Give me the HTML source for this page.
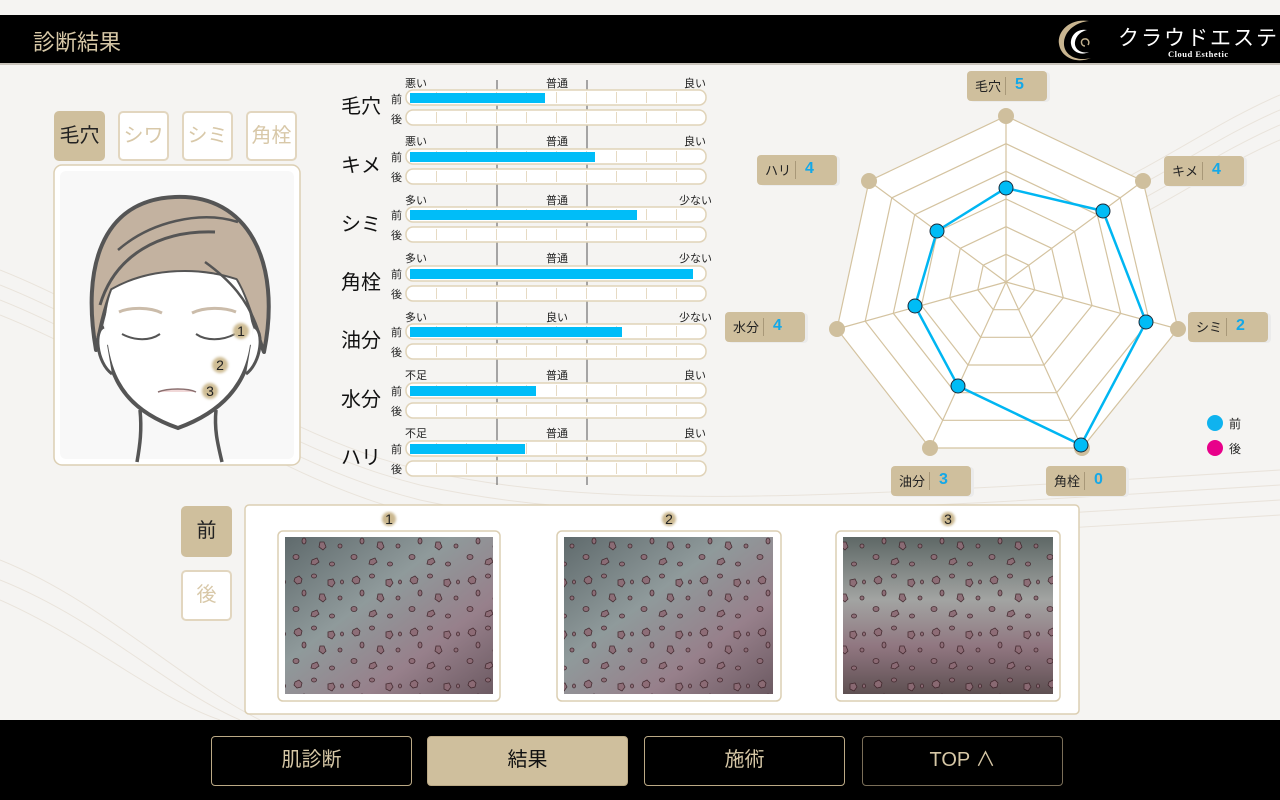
<!DOCTYPE html>
<html><head><meta charset="utf-8">
<style>
*{margin:0;padding:0;box-sizing:border-box}
body{width:1280px;height:800px;overflow:hidden;background:#f5f4f2;font-family:"Liberation Sans","Noto Sans CJK JP",sans-serif;position:relative}
.abs{position:absolute}
.hdr{left:0;top:15px;width:1280px;height:50px;background:#000;border-bottom:2px solid #c9c4bb}
.title{left:33px;top:25px;color:#d6c7a6;font-size:22px}
.tab{position:absolute;width:51px;height:50px;border:2px solid #e2d6bf;border-radius:5px;background:#fff;color:#d8c8a8;font-size:20px;text-align:center;line-height:46px}
.tab.on{background:#cfbf9d;color:#222;border-color:#cfbf9d}
.lbl{position:absolute;width:80px;height:30px;background:#cfbf9d;border-radius:4px;font-size:13px;color:#222;box-shadow:3px 1px 0 #ebebeb}
.lbl span{position:absolute;left:8px;top:5px}
.lbl i{position:absolute;left:38px;top:6px;width:1px;height:18px;background:#a89878}
.lbl b{position:absolute;left:48px;top:5px;color:#14a8e8;font-size:16px}
.nav{position:absolute;top:736px;width:201px;height:50px;border:1.5px solid #bba985;border-radius:4px;color:#d6c7a6;font-size:20px;text-align:center;line-height:47px}
.nav.on{background:#cfbf9d;color:#111}
</style></head><body>
<svg class="abs" style="left:0;top:0" width="1280" height="800" viewBox="0 0 1280 800">
<defs>
<pattern id="tk" patternUnits="userSpaceOnUse" x="407" y="0" width="30" height="800"><line x1="29.5" y1="0" x2="29.5" y2="800" stroke="#e6dac3" stroke-width="1"/></pattern>
<linearGradient id="sk1" x1="0" y1="0" x2="1" y2="1"><stop offset="0" stop-color="#5f6a6c"/><stop offset=".4" stop-color="#8f9a9b"/><stop offset=".7" stop-color="#97808b"/><stop offset="1" stop-color="#6c5a62"/></linearGradient>
<linearGradient id="sk3" x1="0" y1="0" x2="0" y2="1"><stop offset="0" stop-color="#5e6866"/><stop offset=".4" stop-color="#a2a4a2"/><stop offset=".7" stop-color="#907680"/><stop offset="1" stop-color="#5e5052"/></linearGradient>
<pattern id="dots" patternUnits="userSpaceOnUse" width="58" height="52">
<g fill="#8d6a74" stroke="#3d2228" stroke-width=".8" opacity=".9">
<path d="M5,6 l4,-2 3,3 -1,4 -4,1 -3,-3z"/><ellipse cx="24" cy="4" rx="2.5" ry="2"/><path d="M38,8 l5,-1 2,4 -3,4 -4,-2z"/><ellipse cx="14" cy="21" rx="2" ry="3"/><path d="M30,22 l4,0 2,5 -3,3 -4,-3z"/><ellipse cx="50" cy="26" rx="2" ry="2"/><ellipse cx="6" cy="37" rx="3" ry="2.5"/><path d="M22,40 l5,-2 2,4 -4,3 -4,-1z"/><ellipse cx="42" cy="44" rx="2.5" ry="2"/><ellipse cx="52" cy="10" rx="1.5" ry="2"/>
</g></pattern>
<filter id="bl"><feGaussianBlur stdDeviation="1.2"/></filter>
</defs>
<g fill="none" stroke="#e7e0d6" stroke-width="1" opacity=".8">
<path d="M0,270 C150,330 260,430 420,470 C600,510 800,500 1280,470"/>
<path d="M0,285 C150,345 260,445 420,485 C600,525 800,515 1280,485"/>
<path d="M0,300 C150,360 260,460 420,500 C600,540 800,530 1280,500"/>
<path d="M0,315 C150,375 260,475 420,515 C600,555 800,545 1280,515"/>
<path d="M0,560 C100,600 180,680 260,720"/><path d="M0,580 C100,620 170,690 240,720"/><path d="M0,600 C90,640 160,700 220,720"/>
<path d="M1080,200 C1150,170 1220,120 1280,95"/><path d="M1080,215 C1150,185 1220,135 1280,110"/><path d="M1080,230 C1150,200 1220,150 1280,125"/><path d="M1080,245 C1150,215 1220,165 1280,140"/>
</g>
<rect x="54" y="165" width="246" height="300" rx="8" fill="#fff" stroke="#dccfb3" stroke-width="1.5"/>
<rect x="60" y="171" width="234" height="288" rx="6" fill="#f8f8f8"/>
<path d="M96,350 C82,270 100,200 175,197 C248,194 282,262 264,352 C255,330 248,300 236,280 C200,268 150,268 112,290 C104,310 100,330 96,350 Z" fill="#c3b2a0" stroke="#555" stroke-width="4" stroke-linejoin="round"/>
<path d="M112,290 C150,268 200,268 236,280 C248,300 254,325 252,345 C246,385 222,413 178,428 C136,414 114,385 106,345 C104,325 106,305 112,290 Z" fill="#fff"/>
<path d="M106,345 C112,385 132,412 178,428 C222,412 246,385 252,345" fill="none" stroke="#555" stroke-width="4"/>
<path d="M100,305 C115,255 160,230 215,232" fill="none" stroke="#555" stroke-width="3"/>
<path d="M118,250 C150,222 200,210 238,222" fill="none" stroke="#555" stroke-width="2.5"/>
<path d="M205,262 C230,280 248,300 258,330" fill="none" stroke="#555" stroke-width="2.5"/>
<path d="M104,327 C94,330 96,362 112,374" fill="#fff" stroke="#555" stroke-width="3"/>
<path d="M254,327 C264,330 262,362 246,374" fill="#fff" stroke="#555" stroke-width="3"/>
<path d="M140,410 C142,430 140,445 137,462 M216,410 C214,430 218,445 222,462" fill="none" stroke="#555" stroke-width="3.5"/>
<path d="M119,312 C130,307 150,307 162,313 M192,313 C204,307 224,307 236,312" stroke="#cbbcaa" stroke-width="3" fill="none"/>
<path d="M122,334 C135,341 150,341 160,334 M196,334 C206,341 222,341 235,334" stroke="#555" stroke-width="2" fill="none"/>
<path d="M158,392 C168,388 188,388 196,392" stroke="#8a6f6f" stroke-width="1.5" fill="#f1d8d8"/>
<g filter="url(#bl)" fill="#cfbd95"><circle cx="241" cy="331" r="8"/><circle cx="220" cy="365" r="8"/><circle cx="210" cy="391" r="8"/></g>
<g font-size="14" fill="#222" text-anchor="middle"><text x="241" y="336">1</text><text x="220" y="370">2</text><text x="210" y="396">3</text></g>
<line x1="497" y1="80" x2="497" y2="485" stroke="#555"/>
<line x1="587" y1="80" x2="587" y2="485" stroke="#555"/>
<g font-size="11" fill="#222">
<text x="405" y="87">悪い</text><text x="557" y="87" text-anchor="middle">普通</text><text x="706" y="87" text-anchor="end">良い</text>
<text x="391" y="103">前</text><text x="391" y="123">後</text>
<rect x="406" y="90" width="300" height="15" rx="7" fill="#fff" stroke="#e0d3b8" stroke-width="1.5"/><rect x="430" y="92" width="250" height="11" fill="url(#tk)"/><rect x="410" y="93" width="135" height="10" fill="#00bdf8"/>
<rect x="406" y="110" width="300" height="15" rx="7" fill="#fff" stroke="#e0d3b8" stroke-width="1.5"/><rect x="430" y="112" width="250" height="11" fill="url(#tk)"/>
<text x="405" y="145">悪い</text><text x="557" y="145" text-anchor="middle">普通</text><text x="706" y="145" text-anchor="end">良い</text>
<text x="391" y="161">前</text><text x="391" y="181">後</text>
<rect x="406" y="149" width="300" height="15" rx="7" fill="#fff" stroke="#e0d3b8" stroke-width="1.5"/><rect x="430" y="151" width="250" height="11" fill="url(#tk)"/><rect x="410" y="152" width="185" height="10" fill="#00bdf8"/>
<rect x="406" y="169" width="300" height="15" rx="7" fill="#fff" stroke="#e0d3b8" stroke-width="1.5"/><rect x="430" y="171" width="250" height="11" fill="url(#tk)"/>
<text x="405" y="204">多い</text><text x="557" y="204" text-anchor="middle">普通</text><text x="712" y="204" text-anchor="end">少ない</text>
<text x="391" y="219">前</text><text x="391" y="239">後</text>
<rect x="406" y="207" width="300" height="15" rx="7" fill="#fff" stroke="#e0d3b8" stroke-width="1.5"/><rect x="430" y="209" width="250" height="11" fill="url(#tk)"/><rect x="410" y="210" width="227" height="10" fill="#00bdf8"/>
<rect x="406" y="227" width="300" height="15" rx="7" fill="#fff" stroke="#e0d3b8" stroke-width="1.5"/><rect x="430" y="229" width="250" height="11" fill="url(#tk)"/>
<text x="405" y="262">多い</text><text x="557" y="262" text-anchor="middle">普通</text><text x="712" y="262" text-anchor="end">少ない</text>
<text x="391" y="278">前</text><text x="391" y="298">後</text>
<rect x="406" y="266" width="300" height="15" rx="7" fill="#fff" stroke="#e0d3b8" stroke-width="1.5"/><rect x="410" y="269" width="283" height="10" fill="#00bdf8"/>
<rect x="406" y="286" width="300" height="15" rx="7" fill="#fff" stroke="#e0d3b8" stroke-width="1.5"/><rect x="430" y="288" width="250" height="11" fill="url(#tk)"/>
<text x="405" y="321">多い</text><text x="557" y="321" text-anchor="middle">良い</text><text x="712" y="321" text-anchor="end">少ない</text>
<text x="391" y="336">前</text><text x="391" y="356">後</text>
<rect x="406" y="324" width="300" height="15" rx="7" fill="#fff" stroke="#e0d3b8" stroke-width="1.5"/><rect x="430" y="326" width="250" height="11" fill="url(#tk)"/><rect x="410" y="327" width="212" height="10" fill="#00bdf8"/>
<rect x="406" y="344" width="300" height="15" rx="7" fill="#fff" stroke="#e0d3b8" stroke-width="1.5"/><rect x="430" y="346" width="250" height="11" fill="url(#tk)"/>
<text x="405" y="379">不足</text><text x="557" y="379" text-anchor="middle">普通</text><text x="706" y="379" text-anchor="end">良い</text>
<text x="391" y="395">前</text><text x="391" y="415">後</text>
<rect x="406" y="383" width="300" height="15" rx="7" fill="#fff" stroke="#e0d3b8" stroke-width="1.5"/><rect x="430" y="385" width="250" height="11" fill="url(#tk)"/><rect x="410" y="386" width="126" height="10" fill="#00bdf8"/>
<rect x="406" y="403" width="300" height="15" rx="7" fill="#fff" stroke="#e0d3b8" stroke-width="1.5"/><rect x="430" y="405" width="250" height="11" fill="url(#tk)"/>
<text x="405" y="437">不足</text><text x="557" y="437" text-anchor="middle">普通</text><text x="706" y="437" text-anchor="end">良い</text>
<text x="391" y="453">前</text><text x="391" y="473">後</text>
<rect x="406" y="441" width="300" height="15" rx="7" fill="#fff" stroke="#e0d3b8" stroke-width="1.5"/><rect x="430" y="443" width="250" height="11" fill="url(#tk)"/><rect x="410" y="444" width="115" height="10" fill="#00bdf8"/>
<rect x="406" y="461" width="300" height="15" rx="7" fill="#fff" stroke="#e0d3b8" stroke-width="1.5"/><rect x="430" y="463" width="250" height="11" fill="url(#tk)"/>
</g>
<g font-size="20" fill="#111" text-anchor="end">
<text x="381" y="113">毛穴</text><text x="381" y="172">キメ</text><text x="381" y="231">シミ</text><text x="381" y="289">角栓</text><text x="381" y="347">油分</text><text x="381" y="406">水分</text><text x="381" y="464">ハリ</text>
</g>
<g stroke="#d4c3a0" stroke-width="1.2" fill="none">
<polygon points="1006,116 1143,181 1178,329 1082,448 930,448 837,329 869,181" fill="#fff"/>
<polygon points="1006,143.7 1120.2,197.8 1149.3,321.2 1069.3,420.3 942.7,420.3 865.2,321.2 891.8,197.8"/>
<polygon points="1006,171.3 1097.3,214.7 1120.7,313.3 1056.7,392.7 955.3,392.7 893.3,313.3 914.7,214.7"/>
<polygon points="1006,199 1074.5,231.5 1092,305.5 1044,365 968,365 921.5,305.5 937.5,231.5"/>
<polygon points="1006,226.7 1051.7,248.3 1063.3,297.7 1031.3,337.3 980.7,337.3 949.7,297.7 960.3,248.3"/>
<polygon points="1006,254.3 1028.8,265.2 1034.7,289.8 1018.7,309.7 993.3,309.7 977.8,289.8 983.2,265.2"/>
<path d="M1006,282 L1006,116 M1006,282 L1143,181 M1006,282 L1178,329 M1006,282 L1082,448 M1006,282 L930,448 M1006,282 L837,329 M1006,282 L869,181"/>
</g>
<g fill="#cfbf9d"><circle cx="1006" cy="116" r="8"/><circle cx="1143" cy="181" r="8"/><circle cx="1178" cy="329" r="8"/><circle cx="1082" cy="448" r="8"/><circle cx="930" cy="448" r="8"/><circle cx="837" cy="329" r="8"/><circle cx="869" cy="181" r="8"/></g>
<polygon points="1006,188 1103,211 1146,322 1081,445 958,386 915,306 937,231" fill="none" stroke="#00b6f2" stroke-width="2.5"/>
<g fill="#00bcf6" stroke="#1a2a3a" stroke-width="1"><circle cx="1006" cy="188" r="7"/><circle cx="1103" cy="211" r="7"/><circle cx="1146" cy="322" r="7"/><circle cx="1081" cy="445" r="7"/><circle cx="958" cy="386" r="7"/><circle cx="915" cy="306" r="7"/><circle cx="937" cy="231" r="7"/></g>
<circle cx="1215" cy="423" r="8" fill="#0fb3ef"/><circle cx="1215" cy="448" r="8" fill="#e8008a"/>
<g font-size="12" fill="#222"><text x="1229" y="428">前</text><text x="1229" y="453">後</text></g>
<rect x="245" y="505" width="834" height="209" rx="4" fill="#fff" stroke="#dccfb3" stroke-width="1.5"/>
<rect x="278" y="531" width="222" height="170" rx="5" fill="#fff" stroke="#dccfb3" stroke-width="1.5"/>
<rect x="557" y="531" width="224" height="170" rx="5" fill="#fff" stroke="#dccfb3" stroke-width="1.5"/>
<rect x="836" y="531" width="224" height="170" rx="5" fill="#fff" stroke="#dccfb3" stroke-width="1.5"/>
<rect x="285" y="537" width="208" height="157" fill="url(#sk1)"/><rect x="285" y="537" width="208" height="157" fill="url(#dots)"/>
<rect x="564" y="537" width="209" height="157" fill="url(#sk1)"/><rect x="564" y="537" width="209" height="157" fill="url(#dots)"/>
<rect x="843" y="537" width="210" height="157" fill="url(#sk3)"/><rect x="843" y="537" width="210" height="157" fill="url(#dots)"/>
<g filter="url(#bl)" fill="#cbb88f"><circle cx="389" cy="519" r="7"/><circle cx="669" cy="519" r="7"/><circle cx="948" cy="519" r="7"/></g>
<g font-size="14" fill="#222" text-anchor="middle"><text x="389" y="524">1</text><text x="669" y="524">2</text><text x="948" y="524">3</text></g>
</svg>
<div class="abs hdr"></div>
<div class="abs title">診断結果</div>
<svg class="abs" style="left:1055px;top:18px" width="50" height="46" viewBox="0 0 50 46">
<path d="M34,3 C14,0 2,14 4,26 C6,40 22,46 36,40 C20,44 8,36 9,24 C10,12 22,4 34,3 Z" fill="#c9b590"/>
<path d="M32,12 C22,10 15,18 16,26 C17,34 26,38 34,34 C26,36 19,31 20,24 C21,17 27,13 32,12 Z" fill="#fff"/>
<path d="M30,28 C26,28 25,22 29,21 C33,20 35,24 33,27" fill="none" stroke="#bfae8c" stroke-width="1.5"/>
</svg>
<div class="abs" style="left:1118px;top:22px;color:#fff;font-size:21px;letter-spacing:2px;white-space:nowrap">クラウドエステ</div>
<div class="abs" style="left:1168px;top:49px;color:#fff;font-size:8.5px;font-family:'Liberation Serif',serif;font-weight:bold;letter-spacing:.5px;white-space:nowrap">Cloud Esthetic</div>
<div class="tab on" style="left:54px;top:111px">毛穴</div>
<div class="tab" style="left:118px;top:111px">シワ</div>
<div class="tab" style="left:182px;top:111px">シミ</div>
<div class="tab" style="left:246px;top:111px">角栓</div>
<div class="tab on" style="left:181px;top:506px;width:51px;height:51px">前</div>
<div class="tab" style="left:181px;top:570px;width:51px;height:51px">後</div>
<div class="lbl" style="left:967px;top:71px"><span>毛穴</span><i></i><b>5</b></div>
<div class="lbl" style="left:757px;top:155px"><span>ハリ</span><i></i><b>4</b></div>
<div class="lbl" style="left:1164px;top:156px"><span>キメ</span><i></i><b>4</b></div>
<div class="lbl" style="left:1188px;top:312px"><span>シミ</span><i></i><b>2</b></div>
<div class="lbl" style="left:725px;top:312px"><span>水分</span><i></i><b>4</b></div>
<div class="lbl" style="left:891px;top:466px"><span>油分</span><i></i><b>3</b></div>
<div class="lbl" style="left:1046px;top:466px"><span>角栓</span><i></i><b>0</b></div>
<div class="abs" style="left:0;top:720px;width:1280px;height:80px;background:#000"></div>
<div class="nav" style="left:211px">肌診断</div>
<div class="nav on" style="left:427px">結果</div>
<div class="nav" style="left:644px">施術</div>
<div class="nav" style="left:862px;border-color:#7a6e58">TOP ∧</div>
</body></html>
